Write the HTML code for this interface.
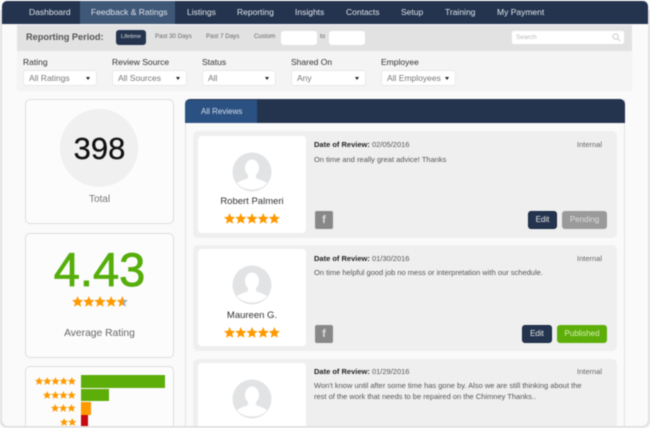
<!DOCTYPE html>
<html><head><meta charset="utf-8">
<style>
html,body{margin:0;padding:0;background:#fff}
#p{position:relative;width:650px;height:428px;overflow:hidden;background:#fff;font-family:"Liberation Sans",sans-serif;color:#555;filter:blur(.45px)}
#p div,#p span.a{position:absolute;box-sizing:border-box;white-space:nowrap}
.n{top:5px;font-size:8.5px;line-height:14px;color:#dfe3ea}
.lab{font-size:8.5px;color:#333;top:57px;line-height:11px}
.sel{top:70px;height:16px;background:#fff;border:1px solid #e8e8e8;border-radius:3px;font-size:8.5px;line-height:14px;color:#777;padding-left:5px}
.sel i{position:absolute;right:6px;top:6px;width:0;height:0;border:2px solid transparent;border-top:3px solid #222;border-bottom:0}
.sm{top:33px;font-size:6.2px;line-height:8px;color:#666}
.card{left:25px;width:149px;background:#fcfcfc;border:1px solid #dedede;border-radius:5px}
.rv{left:193px;width:424px;background:#efefef;border-radius:5px}
.av{left:198px;width:108px;background:#fff;border-radius:4px}
.d{left:314px;font-size:7.5px;line-height:10px;color:#555}
.d b{color:#222}
.t{left:314px;font-size:7.5px;line-height:10.7px;color:#555}
.int{left:577px;font-size:7.5px;line-height:10px;color:#666}
.nm{left:198px;width:108px;text-align:center;font-size:9.5px;line-height:12px;color:#333}
.r{font-size:0;line-height:0}
.r i{display:inline-block;width:11.2px;height:11px;background:#f90;clip-path:polygon(50% 0,64% 34%,100% 38%,73% 61%,82% 98%,50% 78%,18% 98%,27% 61%,0 38%,36% 34%)}
.r.m i{width:8.2px;height:8px}
.f{left:315px;width:18px;height:18px;background:#888;border-radius:2px;color:#ddd;font-size:11px;font-weight:bold;line-height:18px;text-align:center}
.btn{height:18px;border-radius:3px;font-size:8px;line-height:18px;text-align:center;color:#e5e5e5}
.ed{background:#24344f;border:1px solid #1a2740;line-height:16px}
</style></head><body>
<div id="p">
<div style="left:0;top:0;width:650px;height:428px;background:#fafafa"></div>
<div style="left:2px;top:1px;width:646px;height:23px;background:#24344f;border-radius:5px 5px 0 0"></div>
<div style="left:80px;top:1px;width:95px;height:23px;background:#3f5878"></div>
<div class="n" style="left:29px">Dashboard</div>
<div class="n" style="left:91px">Feedback &amp; Ratings</div>
<div class="n" style="left:187px">Listings</div>
<div class="n" style="left:237px">Reporting</div>
<div class="n" style="left:295px">Insights</div>
<div class="n" style="left:346px">Contacts</div>
<div class="n" style="left:401px">Setup</div>
<div class="n" style="left:445px">Training</div>
<div class="n" style="left:497px">My Payment</div>

<div style="left:17px;top:25px;width:615px;height:26px;background:#e2e2e2"></div>
<div style="left:17px;top:51px;width:615px;height:40px;background:#f4f4f4"></div>
<div style="left:26px;top:31px;font-size:9.2px;line-height:13px;font-weight:bold;color:#555">Reporting Period:</div>
<div style="left:116px;top:30px;width:30px;height:15px;background:#24344f;border-radius:3px;color:#ddd;font-size:5.8px;line-height:15px;text-align:center">Lifetime</div>
<div class="sm" style="left:155px">Past 30 Days</div>
<div class="sm" style="left:206px">Past 7 Days</div>
<div class="sm" style="left:254px">Custom</div>
<div style="left:281px;top:31px;width:36px;height:14px;background:#fff;border-radius:3px"></div>
<div class="sm" style="left:320px">to</div>
<div style="left:329px;top:31px;width:36px;height:14px;background:#fff;border-radius:3px"></div>
<div style="left:512px;top:31px;width:112px;height:13px;background:#fff;border-radius:2px;font-size:6.5px;line-height:13px;color:#bbb;padding-left:4px">Search
<svg style="position:absolute;right:3px;top:2px" width="9" height="9" viewBox="0 0 9 9"><circle cx="3.5" cy="3.5" r="2.6" fill="none" stroke="#ccc"/><path d="M5.5 5.5L8 8" stroke="#ccc"/></svg></div>

<div class="lab" style="left:23px">Rating</div>
<div class="lab" style="left:112px">Review Source</div>
<div class="lab" style="left:202px">Status</div>
<div class="lab" style="left:291px">Shared On</div>
<div class="lab" style="left:381px">Employee</div>
<div class="sel" style="left:23px;width:74px">All Ratings<i></i></div>
<div class="sel" style="left:112px;width:75px">All Sources<i></i></div>
<div class="sel" style="left:202px;width:74px">All<i></i></div>
<div class="sel" style="left:291px;width:75px">Any<i></i></div>
<div class="sel" style="left:381px;width:75px">All Employees<i></i></div>

<div class="card" style="top:99px;height:125px"></div>
<div style="left:60px;top:109px;width:78px;height:78px;border-radius:50%;background:#f0f0f0"></div>
<div style="left:25px;width:149px;top:132px;text-align:center;font-size:31px;line-height:34px;color:#111;-webkit-text-stroke:.3px #111">398</div>
<div style="left:25px;width:149px;top:193px;text-align:center;font-size:10px;line-height:13px;color:#777">Total</div>

<div class="card" style="top:233px;height:125px"></div>
<div style="left:25px;width:149px;top:243px;text-align:center;font-size:47px;line-height:54px;color:#55ae0a;-webkit-text-stroke:.8px #55ae0a">4.43</div>
<div class="r" style="left:72px;top:296px;width:60px"><i></i><i></i><i></i><i></i><i style="background:linear-gradient(90deg,#f90 55%,#aaa 55%)"></i></div>
<div style="left:25px;width:149px;top:327px;text-align:center;font-size:10.3px;line-height:13px;color:#666">Average Rating</div>

<div class="card" style="top:366px;height:70px"></div>
<div class="r m" style="left:35px;top:377px;width:45px"><i></i><i></i><i></i><i></i><i></i></div>
<div class="r m" style="left:43px;top:391px;width:37px"><i></i><i></i><i></i><i></i></div>
<div class="r m" style="left:51px;top:404px;width:29px"><i></i><i></i><i></i></div>
<div class="r m" style="left:60px;top:418px;width:20px"><i></i><i></i></div>
<div style="left:81px;top:375px;width:84px;height:13px;background:#5eae0a"></div>
<div style="left:81px;top:389px;width:28px;height:12px;background:#5eae0a"></div>
<div style="left:81px;top:402px;width:10px;height:13px;background:#f90"></div>
<div style="left:81px;top:415px;width:7px;height:13px;background:#c8090f"></div>

<div style="left:185px;top:99px;width:440px;height:328px;background:#fafafa;border-left:1px solid #e2e2e2;border-right:1px solid #e2e2e2"></div>
<div style="left:185px;top:99px;width:440px;height:24px;background:#24344f;border-radius:5px 5px 0 0"></div>
<div style="left:185px;top:100px;width:72px;height:23px;background:#2b5183;border-radius:5px 0 0 0;color:#d5dde8;font-size:8px;line-height:23px;padding-left:16px">All Reviews</div>

<div class="rv" style="top:131px;height:107px"></div>
<div class="av" style="top:136px;height:97px"></div>
<svg style="position:absolute;left:232px;top:152px" width="40" height="40" viewBox="0 0 40 40"><circle cx="20" cy="20" r="19.5" fill="#e1e3e5"/><ellipse cx="20" cy="16" rx="7" ry="8.5" fill="#fff"/><path d="M16.5 22L15.5 26.5C10 28 6 30 5 31.5C9 35.5 14 37.5 20 37.5C26 37.5 31 35.5 35 31.5C34 30 30 28 24.5 26.5L23.5 22Z" fill="#fff"/></svg>
<div class="nm" style="top:196px">Robert Palmeri</div>
<div class="r" style="left:224px;top:213px;width:60px"><i></i><i></i><i></i><i></i><i></i></div>
<div class="d" style="top:140px"><b>Date of Review:</b> 02/05/2016</div>
<div class="int" style="top:140px">Internal</div>
<div class="t" style="top:155px">On time and really great advice! Thanks</div>
<div class="f" style="top:211px">f</div>
<div class="btn ed" style="left:528px;top:211px;width:29px">Edit</div>
<div class="btn" style="left:562px;top:211px;width:45px;background:#9a9a9a;color:#ddd">Pending</div>

<div class="rv" style="top:245px;height:106px"></div>
<div class="av" style="top:249px;height:97px"></div>
<svg style="position:absolute;left:232px;top:265px" width="40" height="40" viewBox="0 0 40 40"><circle cx="20" cy="20" r="19.5" fill="#e1e3e5"/><ellipse cx="20" cy="16" rx="7" ry="8.5" fill="#fff"/><path d="M16.5 22L15.5 26.5C10 28 6 30 5 31.5C9 35.5 14 37.5 20 37.5C26 37.5 31 35.5 35 31.5C34 30 30 28 24.5 26.5L23.5 22Z" fill="#fff"/></svg>
<div class="nm" style="top:310px">Maureen G.</div>
<div class="r" style="left:224px;top:327px;width:60px"><i></i><i></i><i></i><i></i><i></i></div>
<div class="d" style="top:254px"><b>Date of Review:</b> 01/30/2016</div>
<div class="int" style="top:254px">Internal</div>
<div class="t" style="top:268px">On time helpful good job no mess or interpretation with our schedule.</div>
<div class="f" style="top:325px">f</div>
<div class="btn ed" style="left:522px;top:325px;width:30px">Edit</div>
<div class="btn" style="left:557px;top:325px;width:50px;background:#5eae0a;color:#d4efb0">Published</div>

<div class="rv" style="top:359px;height:68px;border-radius:5px 5px 0 0"></div>
<div class="av" style="top:363px;height:64px;border-radius:4px 4px 0 0"></div>
<svg style="position:absolute;left:232px;top:379px" width="40" height="40" viewBox="0 0 40 40"><circle cx="20" cy="20" r="19.5" fill="#e1e3e5"/><ellipse cx="20" cy="16" rx="7" ry="8.5" fill="#fff"/><path d="M16.5 22L15.5 26.5C10 28 6 30 5 31.5C9 35.5 14 37.5 20 37.5C26 37.5 31 35.5 35 31.5C34 30 30 28 24.5 26.5L23.5 22Z" fill="#fff"/></svg>
<div class="d" style="top:367px"><b>Date of Review:</b> 01/29/2016</div>
<div class="int" style="top:367px">Internal</div>
<div class="t" style="top:381px">Won't know until after some time has gone by. Also we are still thinking about the<br>rest of the work that needs to be repaired on the Chimney Thanks..</div>
<div style="left:-1px;top:10px;width:652px;height:418px;border:solid #e2e2e2;border-width:0 3px 2px 3px;border-radius:0 0 9px 9px"></div>
</div>
</body></html>
